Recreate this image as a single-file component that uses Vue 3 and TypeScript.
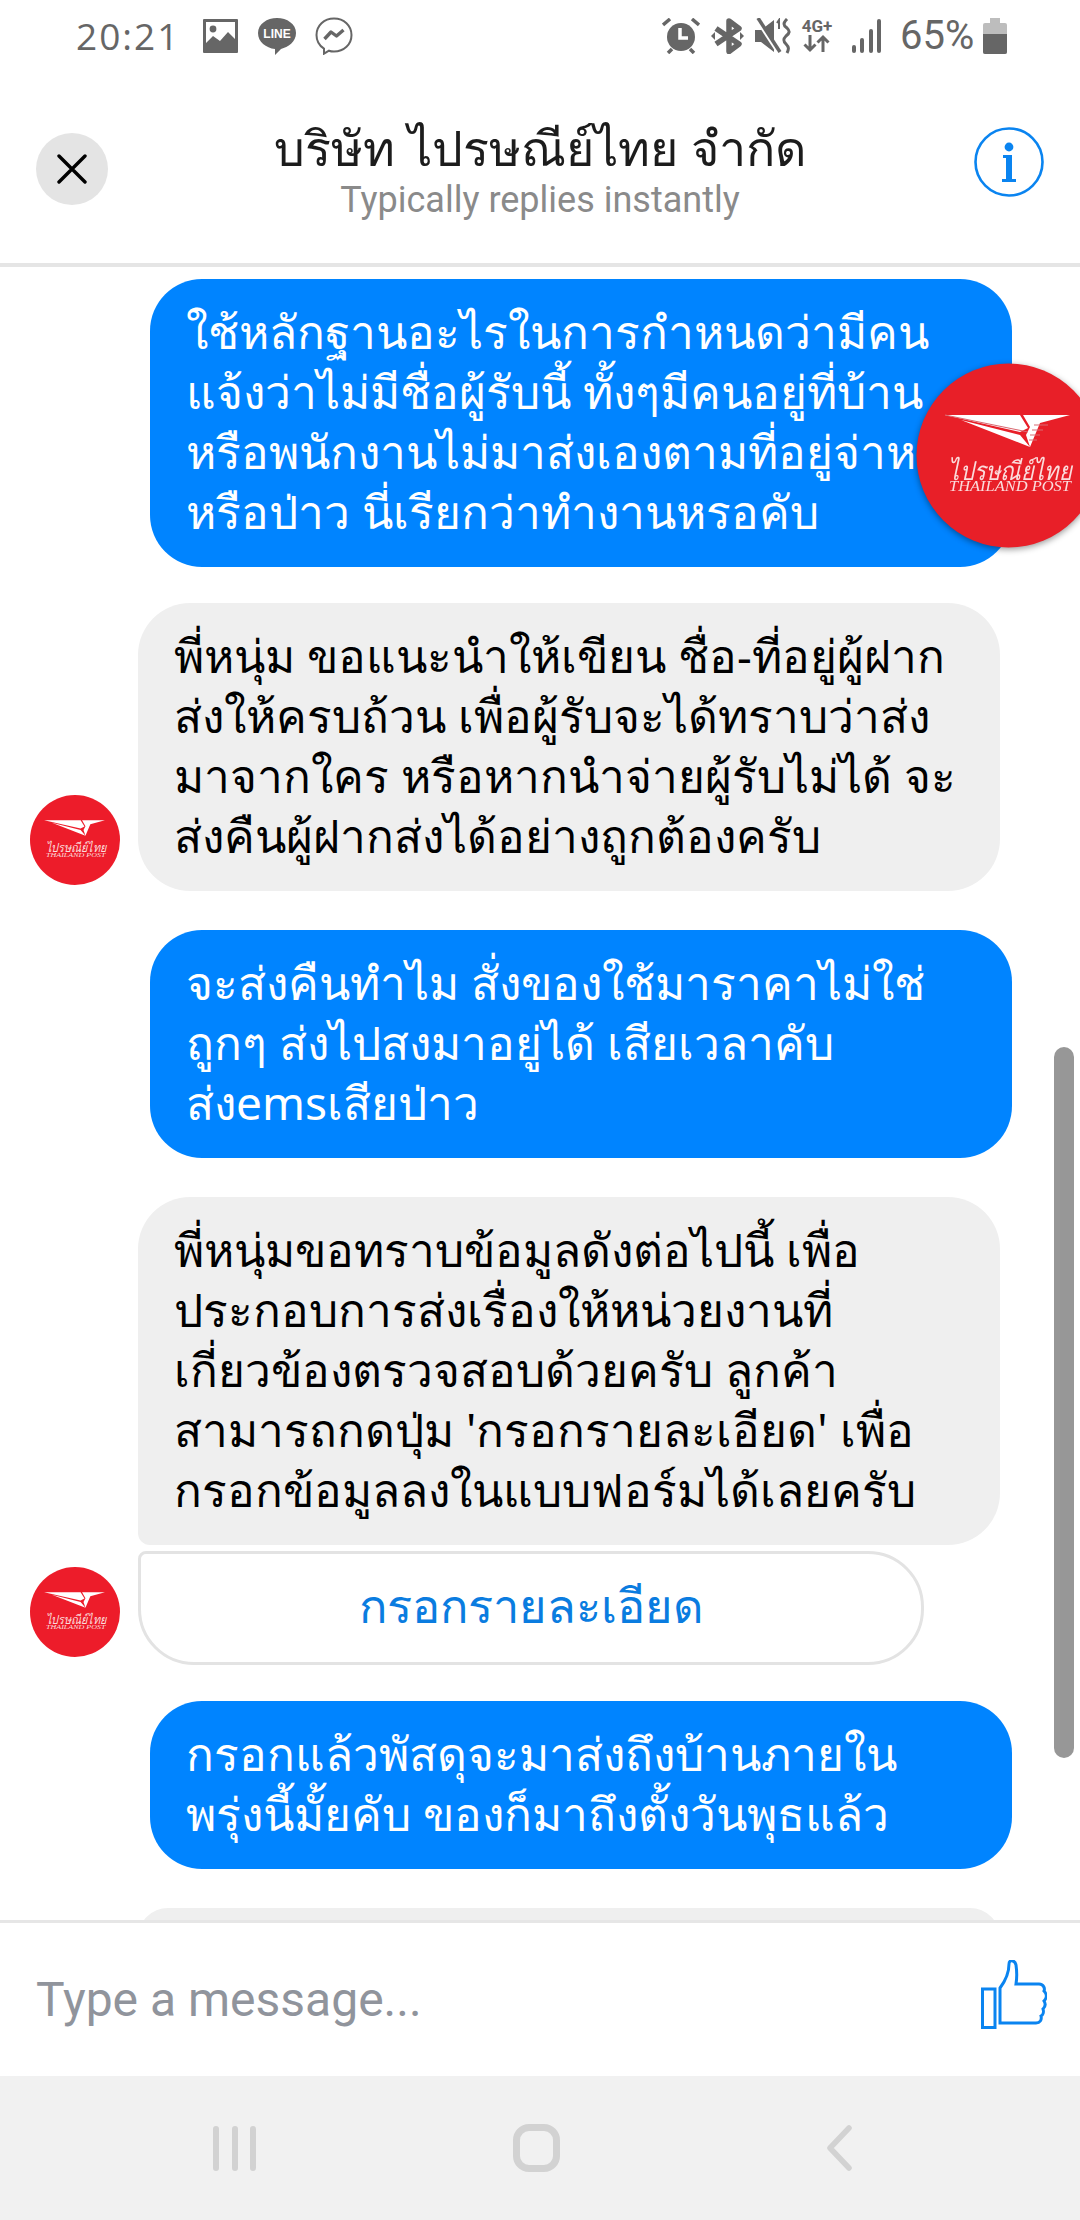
<script setup lang="ts">
interface Msg { side: 'me' | 'them'; lines: string[]; avatar?: boolean; tight?: boolean; }
const messages: Msg[] = [
  { side: 'me', lines: ['ใช้หลักฐานอะไรในการกำหนดว่ามีคน', 'แจ้งว่าไม่มีชื่อผู้รับนี้ ทั้งๆมีคนอยู่ที่บ้าน', 'หรือพนักงานไม่มาส่งเองตามที่อยู่จ่าหน้า', 'หรือป่าว นี่เรียกว่าทำงานหรอคับ'] },
  { side: 'them', avatar: true, tight: true, lines: ['พี่หนุ่ม ขอแนะนำให้เขียน ชื่อ-ที่อยู่ผู้ฝาก', 'ส่งให้ครบถ้วน เพื่อผู้รับจะได้ทราบว่าส่ง', 'มาจากใคร หรือหากนำจ่ายผู้รับไม่ได้ จะ', 'ส่งคืนผู้ฝากส่งได้อย่างถูกต้องครับ'] },
  { side: 'me', lines: ['จะส่งคืนทำไม สั่งของใช้มาราคาไม่ใช่', 'ถูกๆ ส่งไปสงมาอยู่ได้ เสียเวลาคับ', 'ส่งemsเสียป่าว'] },
];
const formLines = ['พี่หนุ่มขอทราบข้อมูลดังต่อไปนี้ เพื่อ', 'ประกอบการส่งเรื่องให้หน่วยงานที่', 'เกี่ยวข้องตรวจสอบด้วยครับ ลูกค้า', "สามารถกดปุ่ม 'กรอกรายละเอียด' เพื่อ", 'กรอกข้อมูลลงในแบบฟอร์มได้เลยครับ'];
const lastLines = ['กรอกแล้วพัสดุจะมาส่งถึงบ้านภายใน', 'พรุ่งนี้มั้ยคับ ของก็มาถึงตั้งวันพุธแล้ว'];
</script>

<template>
  <div class="phone">
    <div class="status">
      <div class="status-left">
        <span class="time">20:21</span>
        <svg class="s-img" width="35" height="34" viewBox="0 0 35 34"><path fill="#666" fill-rule="evenodd" d="M1 0h33a1 1 0 0 1 1 1v32a1 1 0 0 1-1 1H1a1 1 0 0 1-1-1V1a1 1 0 0 1 1-1zM3 3v21l7-7 7 5 8-9 7 7V3z"/><circle cx="10" cy="10" r="3.4" fill="#666"/></svg>
        <svg class="s-line" width="38" height="37" viewBox="0 0 38 37"><path fill="#666" d="M19 0c10 0 19 6 19 15 0 9-8 14-15 16l-6 6v-6C8 30 0 24 0 15 0 6 9 0 19 0z"/><text x="19" y="20" text-anchor="middle" class="line-t">LINE</text></svg>
        <svg class="s-msg" width="38" height="38" viewBox="0 0 38 38"><path fill="none" stroke="#666" stroke-width="2" d="M19 1.500c10 0 17.500 7 17.500 16.500S29 34.500 19 34.500c-2 0-3.500-.2-5-.8l-5 3v-5C4 28.500 1.500 24 1.500 18 1.500 8.500 9 1.500 19 1.500z"/><path fill="none" stroke="#666" stroke-width="3.400" stroke-linejoin="round" d="M9.500 22l6.500-7 5.500 4 7-6"/></svg>
      </div>
      <div class="status-right">
        <svg class="s-alarm" width="38" height="36" viewBox="0 0 38 36"><circle cx="19" cy="19" r="14" fill="#666"/><path d="M18 10v10h8" fill="none" stroke="#fff" stroke-width="3.500"/><path d="M1 7l7-6M37 7l-7-6M6 35l4-4M32 35l-4-4" stroke="#666" stroke-width="3.500"/></svg>
        <svg class="s-bt" width="33" height="36" viewBox="0 0 33 36"><path d="M5 10.500l23 15.500-10 7.500V3l10 7.500-23 15.500" fill="none" stroke="#666" stroke-width="5.500" stroke-linejoin="round"/><path d="M0 18l4-4v8zM33 18l-4-4v8z" fill="#666"/></svg>
        <svg class="s-mute" width="36" height="36" viewBox="0 0 36 36"><path d="M0 12h6L19 2v32L6 24H0z" fill="#666"/><path d="M1 0l22 34" stroke="#fff" stroke-width="4"/><path d="M3 0l22 34" stroke="#666" stroke-width="3.500"/><path d="M22 5l2-3v9" fill="none" stroke="#666" stroke-width="2"/><path d="M32 1c-4 4-4 6 0 9 3 3 3 5-1 8-3 3-3 5 0 8 3 3 3 5 1 9" fill="none" stroke="#666" stroke-width="3"/></svg>
        <div class="net">
          <span>4G+</span>
          <svg width="28" height="19" viewBox="0 0 28 19"><path d="M7 1v15M1.500 10.500L7 16l5.500-5.500M20 18V3M14.500 8.500L20 3l5.500 5.500" fill="none" stroke="#666" stroke-width="3"/></svg>
        </div>
        <div class="bars"><i class="b1"></i><i class="b2"></i><i class="b3"></i><i class="b4"></i></div>
        <span class="pct">65%</span>
        <div class="batt"><b></b><i></i></div>
      </div>
    </div>

    <header class="head">
      <button class="close" aria-label="Close">
        <svg width="30" height="30" viewBox="0 0 30 30"><path d="M2 2l26 26M28 2L2 28" stroke="#000" stroke-width="3.400" stroke-linecap="round"/></svg>
      </button>
      <div class="titles">
        <div class="title">บริษัท ไปรษณีย์ไทย จำกัด</div>
        <div class="sub">Typically replies instantly</div>
      </div>
      <svg class="info" width="70" height="70" viewBox="0 0 70 70"><circle cx="35" cy="35" r="33.500" fill="none" stroke="#0a84f0" stroke-width="2.600"/><circle cx="35" cy="20" r="4.400" fill="#0a84f0"/><path d="M29 28h9v24h4v3H28v-3h4V31h-3z" fill="#0a84f0"/></svg>
    </header>

    <main class="chat">
      <div v-for="(m, i) in messages" :key="i" class="row" :class="[m.side, { tight: m.tight }]">
        <svg v-if="m.avatar" class="avatar" viewBox="0 0 185 185">
          <circle cx="92.500" cy="92.500" r="92.500" fill="#ed1c2a"/>
          <path d="M29 52h75l8 13-8 4zM45 57l59 15 10 12zM107 52h47l-30 8-10 24-4-12 4-8z" fill="#fff"/>
          <text x="94" y="117" text-anchor="middle" textLength="123" lengthAdjust="spacingAndGlyphs" class="logo-a">ไปรษณีย์ไทย</text>
          <text x="94" y="128" text-anchor="middle" textLength="122" lengthAdjust="spacingAndGlyphs" class="logo-b">THAILAND POST</text>
        </svg>
        <div class="bubble" :class="m.side">
          <span v-for="l in m.lines" :key="l" class="ln">{{ l }}</span>
        </div>
      </div>

      <div class="row them form">
        <svg class="avatar" viewBox="0 0 185 185">
          <circle cx="92.500" cy="92.500" r="92.500" fill="#ed1c2a"/>
          <path d="M29 52h75l8 13-8 4zM45 57l59 15 10 12zM107 52h47l-30 8-10 24-4-12 4-8z" fill="#fff"/>
          <text x="94" y="117" text-anchor="middle" textLength="123" lengthAdjust="spacingAndGlyphs" class="logo-a">ไปรษณีย์ไทย</text>
          <text x="94" y="128" text-anchor="middle" textLength="122" lengthAdjust="spacingAndGlyphs" class="logo-b">THAILAND POST</text>
        </svg>
        <div class="form-col">
          <div class="bubble them flat">
            <span v-for="l in formLines" :key="l" class="ln">{{ l }}</span>
          </div>
          <button class="cta">กรอกรายละเอียด</button>
        </div>
      </div>

      <div class="row me tight">
        <div class="bubble me"><span v-for="l in lastLines" :key="l" class="ln">{{ l }}</span></div>
      </div>
      <div class="row them">
        <div class="bubble them peek"></div>
      </div>

      <div class="scroll"></div>
      <svg class="chathead" viewBox="0 0 185 185">
        <circle cx="92.500" cy="92.500" r="92" fill="#e81f28"/>
        <path d="M29 52h75l8 13-8 4zM45 57l59 15 10 12zM107 52h47l-30 8-10 24-4-12 4-8z" fill="#fff"/>
        <path d="M29 52l83 17M118 62h14M116 67h11M114 72h10M113 77h8" stroke="#d96a72" stroke-width="1.200"/>
        <text x="94" y="117" text-anchor="middle" textLength="123" lengthAdjust="spacingAndGlyphs" class="logo-a">ไปรษณีย์ไทย</text>
        <text x="94" y="128" text-anchor="middle" textLength="122" lengthAdjust="spacingAndGlyphs" class="logo-b">THAILAND POST</text>
      </svg>
    </main>

    <div class="input">
      <span class="ph">Type a message...</span>
      <svg width="66" height="69" viewBox="0 0 66 69" class="thumb"><path d="M1.500 29H14v38.500H1.500z" fill="none" stroke="#0a84f0" stroke-width="3"/><path d="M19 63V28c6-8 9-16 9-24 0-5 6-4 7 1 1 7 1 13 0 19h23c5 0 6 5 5 7 3 3 3 7 0 10 2 3 1 6-1 8 1 3 0 6-2 7 1 4-1 7-5 7z" fill="none" stroke="#0a84f0" stroke-width="3"/></svg>
    </div>

    <nav class="nav">
      <div class="recents"><i></i><i></i><i></i></div>
      <div class="home"></div>
      <svg width="26" height="46" viewBox="0 0 26 46"><path d="M23 3L4 23l19 20" fill="none" stroke="#d2d2d2" stroke-width="5.500" stroke-linecap="round" stroke-linejoin="round"/></svg>
    </nav>
  </div>
</template>

<style scoped>
.phone {
  width: 1080px;
  height: 2220px;
  display: flex;
  flex-direction: column;
  background: #fff;
  overflow: hidden;
  font-family: "Noto Sans", "DejaVu Sans", "Liberation Sans", sans-serif;
}
.status {
  height: 74px;
  flex: none;
  box-sizing: border-box;
  display: flex;
  align-items: center;
  justify-content: space-between;
  padding: 0 73px 2px 76px;
  color: #666;
}
.status-left, .status-right { display: flex; align-items: center; }
.time { font: 37px/40px "Open Sans", sans-serif; letter-spacing: 2px; width: 102px; white-space: nowrap; }
.s-img { margin-left: 25px; }
.s-line { margin-left: 20px; }
.s-msg { margin-left: 19px; }
.line-t { font: 700 12px "Liberation Sans", sans-serif; fill: #fff; }
.s-bt { margin-left: 11px; }
.s-mute { margin-left: 11px; }
.net { margin-left: 9px; display: flex; flex-direction: column; align-items: center; font: 700 17px/15px Roboto, sans-serif; color: #666; width: 35px; }
.bars { display: flex; align-items: flex-end; gap: 4.500px; height: 34px; margin-left: 17px; }
.bars i { width: 4px; background: #666; display: block; border-radius: 2px; }
.b1 { height: 8px; } .b2 { height: 15px; } .b3 { height: 24px; } .b4 { height: 34px; }
.pct { font: 40px/40px Roboto, sans-serif; color: #666; margin-left: 19px; width: 74px; white-space: nowrap; }
.batt { margin-left: 9px; width: 24px; height: 31px; margin-top: 5px; background: #bdbdbd; position: relative; border-radius: 2px; }
.batt b { position: absolute; left: 7px; width: 10px; top: -5px; height: 5px; background: #bdbdbd; }
.batt i { position: absolute; left: 0; right: 0; bottom: 0; height: 20px; background: #666; border-radius: 0 0 2px 2px; }
.head {
  flex: none;
  height: 189px;
  display: flex;
  align-items: center;
  justify-content: space-between;
  padding: 0 36px;
  border-bottom: 4px solid #e5e5e5;
  position: relative;
}
.close {
  width: 72px;
  height: 72px;
  border-radius: 50%;
  border: 0;
  padding: 0;
  background: #e4e4e4;
  display: flex;
  align-items: center;
  justify-content: center;
}
.titles { position: absolute; left: 0; right: 0; top: 43px; text-align: center; }
.title { font-size: 48.500px; line-height: 60px; color: #1c1c1c; }
.sub { font: 36px/46px Roboto, sans-serif; color: #8a8a8a; }
.info { margin-bottom: 13px; }
.chat {
  flex: 1;
  min-height: 0;
  position: relative;
  overflow: hidden;
  padding-top: 12px;
  display: flex;
  flex-direction: column;
  gap: 39px;
}
.row { display: flex; align-items: flex-end; flex: none; }
.row.tight { margin-top: -3px; }
.row.me { padding-left: 150px; }
.row.them { padding-left: 138px; position: relative; }
.avatar { position: absolute; left: 30px; bottom: 6px; width: 90px; height: 90px; }
.bubble {
  width: 862px;
  box-sizing: border-box;
  border-radius: 52px;
  padding: 22px 36px 26px;
  font-size: 46px;
  line-height: 60px;
}
.bubble.me { background: #0084ff; color: #fff; }
.bubble.them { background: #efefef; color: #000; }
.ln { display: block; white-space: nowrap; }
.bubble.flat { border-bottom-left-radius: 12px; }
.form-col { display: flex; flex-direction: column; gap: 6px; }
.form .avatar { bottom: 8px; }
.cta {
  width: 786px;
  height: 114px;
  border: 3px solid #e3e3e3;
  border-radius: 8px 56px 56px 56px;
  background: #fff;
  color: #0a7ce0;
  font: 47px "Noto Sans", "DejaVu Sans", sans-serif;
  padding: 0 0 4px;
}
.peek { height: 60px; }
.scroll { position: absolute; left: 1054px; top: 780px; width: 20px; height: 711px; border-radius: 10px; background: #979797; }
.chathead { position: absolute; left: 916px; top: 96px; width: 185px; height: 185px; filter: drop-shadow(0 2px 3px rgba(0,0,0,.4)); }
.logo-a { font: italic 26px "Noto Sans", sans-serif; fill: #fbdcdc; }
.logo-b { font: italic 14px "Liberation Serif", serif; fill: #fbdcdc; }
.input {
  flex: none;
  height: 153px;
  border-top: 3px solid #e6e6e6;
  background: #fff;
  display: flex;
  align-items: center;
  justify-content: space-between;
  padding: 0 33px 0 36px;
}
.ph { font: 48px Roboto, sans-serif; color: #90949c; }
.thumb { margin-top: -11px; }
.nav {
  flex: none;
  height: 144px;
  background: #f1f1f1;
  display: flex;
  align-items: center;
  padding-left: 213px;
}
.recents { display: flex; gap: 12.500px; width: 43px; flex: none; }
.recents i { width: 6px; height: 45px; background: #d2d2d2; border-radius: 3px; display: block; flex: none; }
.home { flex: none; box-sizing: border-box; width: 47px; height: 48px; border: 7px solid #d2d2d2; border-radius: 16px; margin-left: 257px; }
.nav svg { margin-left: 266px; }
</style>
